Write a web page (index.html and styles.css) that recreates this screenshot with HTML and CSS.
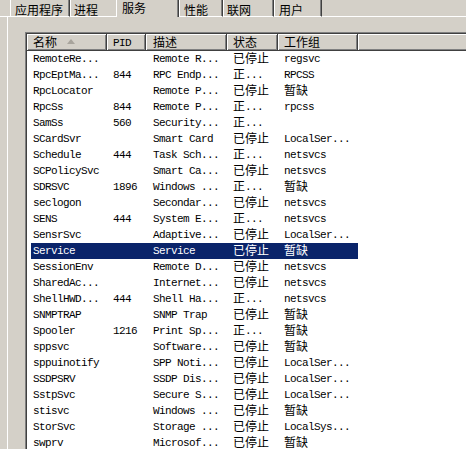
FILE: index.html
```html
<!DOCTYPE html>
<html lang="zh-CN">
<head>
<meta charset="utf-8">
<title>任务管理器 - 服务</title>
<link rel="stylesheet" href="styles.css">
</head>
<body>
<div class="tm">
  <div class="tabs">
    <div class="tab-lead"></div>
    <div class="tab t1">应用程序</div>
    <div class="tab t2">进程</div>
    <div class="tab sel t3">服务</div>
    <div class="tab t4">性能</div>
    <div class="tab t5">联网</div>
    <div class="tab t6">用户</div>
    <div class="tab-fill"></div>
  </div>
  <div class="panel">
    <div class="lv">
      <div class="lv-in">
        <div class="hdr">
          <div class="hc h1"><span class="c">名称</span><svg class="sort" width="8" height="5" viewBox="0 0 8 5"><polygon points="4,0 8,5 0,5" fill="#a8a49c"/></svg></div>
          <div class="hc h2">PID</div>
          <div class="hc h3"><span class="c">描述</span></div>
          <div class="hc h4"><span class="c">状态</span></div>
          <div class="hc h5"><span class="c">工作组</span></div>
          <div class="hc hfill"></div>
        </div>
        <div class="rows">
          <div class="row"><div class="d1">RemoteRe...</div><div class="d2"></div><div class="d3">Remote R...</div><div class="d4"><span class="c">已停止</span></div><div class="d5">regsvc</div></div>
          <div class="row"><div class="d1">RpcEptMa...</div><div class="d2">844</div><div class="d3">RPC Endp...</div><div class="d4"><span class="c">正</span>...</div><div class="d5">RPCSS</div></div>
          <div class="row"><div class="d1">RpcLocator</div><div class="d2"></div><div class="d3">Remote P...</div><div class="d4"><span class="c">已停止</span></div><div class="d5"><span class="c">暂缺</span></div></div>
          <div class="row"><div class="d1">RpcSs</div><div class="d2">844</div><div class="d3">Remote P...</div><div class="d4"><span class="c">正</span>...</div><div class="d5">rpcss</div></div>
          <div class="row"><div class="d1">SamSs</div><div class="d2">560</div><div class="d3">Security...</div><div class="d4"><span class="c">正</span>...</div><div class="d5"></div></div>
          <div class="row"><div class="d1">SCardSvr</div><div class="d2"></div><div class="d3">Smart Card</div><div class="d4"><span class="c">已停止</span></div><div class="d5">LocalSer...</div></div>
          <div class="row"><div class="d1">Schedule</div><div class="d2">444</div><div class="d3">Task Sch...</div><div class="d4"><span class="c">正</span>...</div><div class="d5">netsvcs</div></div>
          <div class="row"><div class="d1">SCPolicySvc</div><div class="d2"></div><div class="d3">Smart Ca...</div><div class="d4"><span class="c">已停止</span></div><div class="d5">netsvcs</div></div>
          <div class="row"><div class="d1">SDRSVC</div><div class="d2">1896</div><div class="d3">Windows ...</div><div class="d4"><span class="c">正</span>...</div><div class="d5"><span class="c">暂缺</span></div></div>
          <div class="row"><div class="d1">seclogon</div><div class="d2"></div><div class="d3">Secondar...</div><div class="d4"><span class="c">已停止</span></div><div class="d5">netsvcs</div></div>
          <div class="row"><div class="d1">SENS</div><div class="d2">444</div><div class="d3">System E...</div><div class="d4"><span class="c">正</span>...</div><div class="d5">netsvcs</div></div>
          <div class="row"><div class="d1">SensrSvc</div><div class="d2"></div><div class="d3">Adaptive...</div><div class="d4"><span class="c">已停止</span></div><div class="d5">LocalSer...</div></div>
          <div class="row selected"><div class="d1">Service</div><div class="d2"></div><div class="d3">Service</div><div class="d4"><span class="c">已停止</span></div><div class="d5"><span class="c">暂缺</span></div></div>
          <div class="row"><div class="d1">SessionEnv</div><div class="d2"></div><div class="d3">Remote D...</div><div class="d4"><span class="c">已停止</span></div><div class="d5">netsvcs</div></div>
          <div class="row"><div class="d1">SharedAc...</div><div class="d2"></div><div class="d3">Internet...</div><div class="d4"><span class="c">已停止</span></div><div class="d5">netsvcs</div></div>
          <div class="row"><div class="d1">ShellHWD...</div><div class="d2">444</div><div class="d3">Shell Ha...</div><div class="d4"><span class="c">正</span>...</div><div class="d5">netsvcs</div></div>
          <div class="row"><div class="d1">SNMPTRAP</div><div class="d2"></div><div class="d3">SNMP Trap</div><div class="d4"><span class="c">已停止</span></div><div class="d5"><span class="c">暂缺</span></div></div>
          <div class="row"><div class="d1">Spooler</div><div class="d2">1216</div><div class="d3">Print Sp...</div><div class="d4"><span class="c">正</span>...</div><div class="d5"><span class="c">暂缺</span></div></div>
          <div class="row"><div class="d1">sppsvc</div><div class="d2"></div><div class="d3">Software...</div><div class="d4"><span class="c">已停止</span></div><div class="d5"><span class="c">暂缺</span></div></div>
          <div class="row"><div class="d1">sppuinotify</div><div class="d2"></div><div class="d3">SPP Noti...</div><div class="d4"><span class="c">已停止</span></div><div class="d5">LocalSer...</div></div>
          <div class="row"><div class="d1">SSDPSRV</div><div class="d2"></div><div class="d3">SSDP Dis...</div><div class="d4"><span class="c">已停止</span></div><div class="d5">LocalSer...</div></div>
          <div class="row"><div class="d1">SstpSvc</div><div class="d2"></div><div class="d3">Secure S...</div><div class="d4"><span class="c">已停止</span></div><div class="d5">LocalSer...</div></div>
          <div class="row"><div class="d1">stisvc</div><div class="d2"></div><div class="d3">Windows ...</div><div class="d4"><span class="c">已停止</span></div><div class="d5"><span class="c">暂缺</span></div></div>
          <div class="row"><div class="d1">StorSvc</div><div class="d2"></div><div class="d3">Storage ...</div><div class="d4"><span class="c">已停止</span></div><div class="d5">LocalSys...</div></div>
          <div class="row"><div class="d1">swprv</div><div class="d2"></div><div class="d3">Microsof...</div><div class="d4"><span class="c">已停止</span></div><div class="d5"><span class="c">暂缺</span></div></div>
        </div>
      </div>
    </div>
  </div>
</div>
</body>
</html>
```
FILE: styles.css
```css
* {
  box-sizing: border-box;
}

html,
body {
  margin: 0;
  padding: 0;
  background: #d4d0c8;
  overflow: hidden;
}

body {
  width: 466px;
  height: 449px;
  font-family: "Noto Sans CJK SC", sans-serif;
  font-size: 12px;
  color: #000;
}

.tm {
  width: 466px;
  height: 449px;
  overflow: hidden;
}

/* ---------- tab strip ---------- */
.tabs {
  display: flex;
  align-items: flex-end;
  height: 17px;
}

.tab-lead {
  width: 10px;
  height: 17px;
  border-bottom: 1px solid #fff;
}

.tab {
  height: 17px;
  line-height: 14px;
  padding-top: 3px;
  white-space: nowrap;
  border-left: 1px solid #fff;
  border-right: 1px solid #404040;
  border-bottom: 1px solid #fff;
  box-shadow: inset -1px 0 0 #808080;
}

.tab.sel {
  border-bottom: none;
  padding-top: 0;
  line-height: 15px;
}

.t1 { width: 60px; padding-left: 4px; }
.t2 { width: 46px; padding-left: 3px; border-right: none; box-shadow: none; }
.t3 { width: 63px; padding-left: 5px; }
.t4 { width: 44px; padding-left: 4px; }
.t5 { width: 51px; padding-left: 3px; }
.t6 { width: 48px; padding-left: 4px; }

.tab-fill {
  flex: 1;
  height: 17px;
  border-bottom: 1px solid #fff;
}

/* ---------- panel ---------- */
.panel {
  margin-left: 7px;
  height: 432px;
  border-left: 1px solid #fff;
  padding: 15px 0 0 17px;
}

.lv {
  height: 480px;
  border-top: 1px solid #808080;
  border-left: 1px solid #808080;
  font-family: "Liberation Mono", monospace;
  font-size: 11px;
  letter-spacing: -0.6px;
}

.lv-in {
  height: 100%;
  background: #fff;
  border-top: 1px solid #404040;
  border-left: 1px solid #404040;
}

.c {
  font-family: "Noto Sans CJK SC", sans-serif;
  font-size: 12px;
  letter-spacing: 0;
  line-height: 14px;
  vertical-align: top;
}

/* ---------- header ---------- */
.hdr {
  display: flex;
  height: 17px;
}

.hc {
  display: flex;
  align-items: flex-start;
  height: 17px;
  padding: 1px 0 0 6px;
  line-height: 15px;
  white-space: nowrap;
  background: #d4d0c8;
  border-right: 1px solid #404040;
  border-bottom: 1px solid #404040;
  box-shadow: inset 1px 1px 0 #fff, inset -1px -1px 0 #808080;
}

.h1 { width: 80px; }
.h2 { width: 39px; padding-top: 2px; }
.h3 { width: 81px; padding-left: 7px; }
.h4 { width: 51px; }
.h5 { width: 80px; }
.hfill {
  flex: 1;
  border-right: none;
  box-shadow: inset 1px 1px 0 #fff, inset 0 -1px 0 #808080;
}

.sort {
  margin-left: 10px;
  margin-top: 4px;
  flex: none;
}

/* ---------- rows ---------- */
.row {
  display: flex;
  width: 327px;
  height: 16px;
  margin-left: 4px;
  line-height: 16px;
  white-space: nowrap;
}

.row > div {
  height: 16px;
}

.row.selected {
  background: #0a246a;
  color: #fff;
}

.d1 { width: 76px; padding-left: 2px; }
.d2 { width: 39px; padding-left: 6px; }
.d3 { width: 81px; padding-left: 7px; }
.d4 { width: 51px; padding-left: 6px; }
.d5 { width: 80px; padding-left: 6px; }
```
